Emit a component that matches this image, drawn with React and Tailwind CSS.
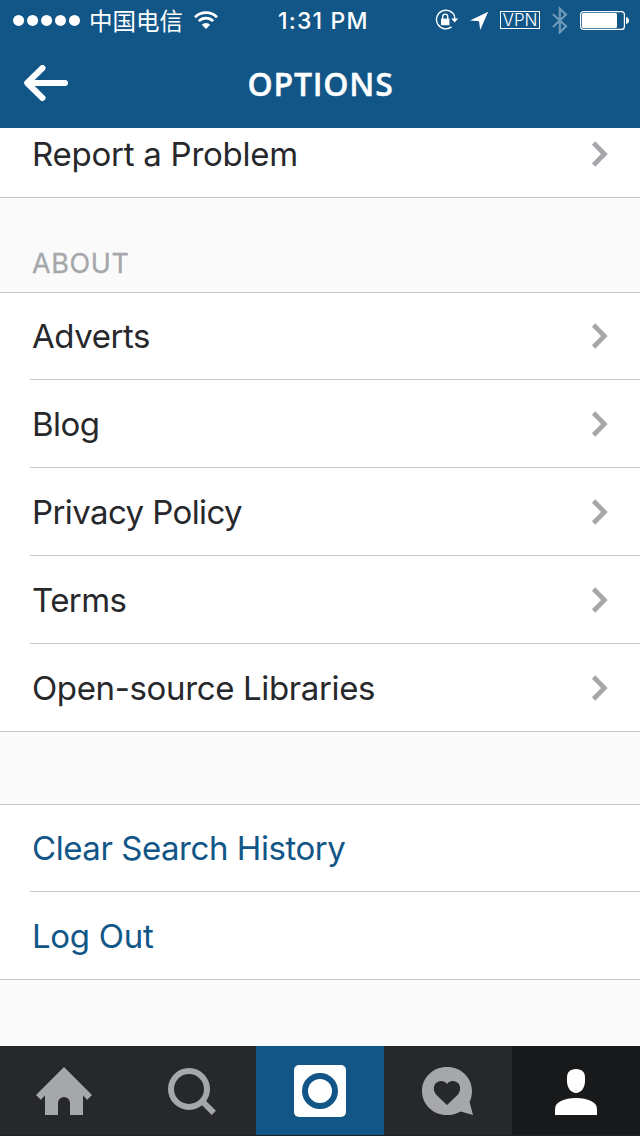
import React from "react";

const aboutLinks = [
  { label: "Adverts", spacing: "tracking-[-0.45px]" },
  { label: "Blog", spacing: "tracking-[-0.5px]" },
  { label: "Privacy Policy", spacing: "tracking-[-0.6px]" },
  { label: "Terms", spacing: "tracking-[-0.55px]" },
  { label: "Open-source Libraries", spacing: "tracking-[-0.36px]" },
];

const accountActions = [
  { label: "Clear Search History", spacing: "tracking-[-0.45px]" },
  { label: "Log Out", spacing: "tracking-[-0.3px]" },
];

function Chevron() {
  return (
    <svg width="18" height="28" viewBox="0 0 18 28" className="shrink-0">
      <path d="M2.6 3L13.4 14L2.6 25" fill="none" stroke="#a5a7aa" strokeWidth="4.8" />
    </svg>
  );
}

function StatusBar() {
  return (
    <div className="grid h-10 grid-cols-[278px_90px_1fr] items-center text-white">
      {/* Signal, carrier, wifi */}
      <div className="flex h-10 items-center pl-[13px]">
        <svg width="68" height="12" viewBox="0 0 68 12">
          <circle cx="5.6" cy="6.4" r="5.5" fill="#fff" />
          <circle cx="19.6" cy="6.4" r="5.5" fill="#fff" />
          <circle cx="33.6" cy="6.4" r="5.5" fill="#fff" />
          <circle cx="47.5" cy="6.4" r="5.5" fill="#fff" />
          <circle cx="61.5" cy="6.4" r="5.5" fill="#fff" />
        </svg>
        <span className="ml-[8px] whitespace-nowrap font-['Noto_Sans_CJK_SC',sans-serif] text-[23.5px] leading-[38px] font-normal">
          中国电信
        </span>
        <svg width="26" height="20" viewBox="0 0 26 20" className="ml-[10px]">
          <path d="M2 7.2A15.6 15.6 0 0 1 24 7.2" fill="none" stroke="#fff" strokeWidth="2.8" />
          <path d="M5.8 11.1A10.2 10.2 0 0 1 20.2 11.1" fill="none" stroke="#fff" strokeWidth="2.7" />
          <path d="M13 19L8.8 14.8A5.9 5.9 0 0 1 17.2 14.8Z" fill="#fff" />
        </svg>
      </div>

      <span className="pt-0.5 whitespace-nowrap text-[23px] leading-[38px] font-medium tracking-[1.2px]">1:31 PM</span>

      {/* Lock, location, vpn, bluetooth, battery */}
      <div className="flex h-10 items-center pl-[66px]">
        <svg width="25" height="22" viewBox="0 0 25 22">
          <path d="M20.6 7.5A9.3 9.3 0 1 0 17.5 17.9" fill="none" stroke="#fff" strokeWidth="1.4" />
          <path d="M17.2 9.5H24.2L20.6 13.6Z" fill="#fff" />
          <path d="M20.6 7.5V10" stroke="#fff" strokeWidth="1.4" />
          <rect x="7" y="9.6" width="8.4" height="6.6" fill="#fff" />
          <path d="M8.7 10V7.6A2.5 2.5 0 0 1 13.7 7.6V10" fill="none" stroke="#fff" strokeWidth="1.4" />
        </svg>
        <svg width="20" height="20" viewBox="0 0 20 20" className="ml-[10px]">
          <path d="M19.2 1.8L11.2 20L10 11.2L1 10.4Z" fill="#fff" />
        </svg>
        <span className="ml-[11px] flex h-[18px] w-10 items-center justify-center border border-white text-[17px] leading-none font-light">
          VPN
        </span>
        <svg width="16" height="28" viewBox="0 0 16 28" className="ml-[12px]">
          <path
            d="M1 8.2L14 20.3L7.8 26.3V2.8L14 8.600L1 21"
            fill="none"
            stroke="#fff"
            strokeOpacity="0.4"
            strokeWidth="2.2"
          />
        </svg>
        <svg width="50" height="20" viewBox="0 0 50 20" className="ml-[12px]">
          <rect x="0.6" y="1.6" width="43.8" height="17.8" rx="3" fill="none" stroke="#fff" strokeWidth="1.2" />
          <rect x="2" y="3" width="35" height="15" rx="1.5" fill="#fff" />
          <path d="M46 7Q49 8 49 10.5T46 14Z" fill="#fff" />
        </svg>
      </div>
    </div>
  );
}

function Header() {
  return (
    <header className="h-32 bg-[#125688] text-white">
      <StatusBar />
      <div className="grid h-[88px] grid-cols-[120px_1fr_120px] items-center">
        <button className="pl-6">
          <svg width="45" height="38" viewBox="0 0 45 38">
            <path
              d="M18.5 3L3.200 18L18.5 33M4 18H41"
              fill="none"
              stroke="#fff"
              strokeWidth="6"
              strokeLinecap="round"
              strokeLinejoin="round"
            />
          </svg>
        </button>
        <h1 className="pl-px text-center font-['Open_Sans',sans-serif] text-[32px] leading-[44px] font-semibold tracking-[0.8px] [-webkit-text-stroke:0.4px_white]">
          OPTIONS
        </h1>
      </div>
    </header>
  );
}

function TabBar() {
  return (
    <nav className="grid h-[90px] grid-cols-5 border-b border-[#1f2024] bg-[#27282c]">
      <a className="flex justify-center pt-5">
        <svg width="58" height="50" viewBox="0 0 58 50">
          <path
            d="M29 1L57 29L52.2 33.8L48 29.6V49H35V37A6 6 0 0 0 23 37V49H10V29.6L5.8 33.8L1 29Z"
            fill="#a5a7aa"
          />
        </svg>
      </a>
      <a className="flex justify-center pt-5">
        <svg width="52" height="52" viewBox="0 0 52 52">
          <circle cx="23" cy="23" r="18" fill="none" stroke="#a5a7aa" strokeWidth="6" />
          <path d="M36 35L47.8 46.8" stroke="#a5a7aa" strokeWidth="6" />
        </svg>
      </a>
      <a className="flex justify-center bg-[#125688] pt-[19px]">
        <svg width="52" height="52" viewBox="0 0 52 52">
          <rect width="52" height="52" rx="5" fill="#fff" />
          <circle cx="26" cy="26" r="15" fill="none" stroke="#125688" strokeWidth="6" />
        </svg>
      </a>
      <a className="flex justify-center pt-5">
        <svg width="54" height="50" viewBox="0 0 54 50">
          <path
            d="M26 1C40 1 51 11.5 51 25C51 29 50 33 48.6 36L52 49L39.6 45.4C35.5 47.8 31 49 26 49C12 49 1 38.5 1 25C1 11.5 12 1 26 1Z"
            fill="#a5a7aa"
          />
          <path
            d="M26 39L16 29.5C12 25.5 12 20 15 17C18.5 13.8 23.8 14.4 26 18C28.2 14.4 33.5 13.8 37 17C40 20 40 25.5 36 29.5Z"
            fill="#27282c"
          />
        </svg>
      </a>
      <a className="flex justify-center bg-[#18191b] pt-[22px]">
        <svg width="42" height="48" viewBox="0 0 42 48">
          <path
            d="M21 1C27 1 30 4.500 30 9.500V13C30 20 26 25 21 25C16 25 12 20 12 13V9.500C12 4.500 15 1 21 1Z"
            fill="#fff"
          />
          <path d="M0 47V41C0 34 9 30 21 30S42 34 42 41V47Z" fill="#fff" />
        </svg>
      </a>
    </nav>
  );
}

function App() {
  return (
    <div className="flex h-[1136px] w-[640px] flex-col overflow-hidden bg-[#fafafa] font-[Inter,sans-serif] text-[#27282c]">
      <Header />

      <main className="flex-1 text-[33px] leading-[44px]">
        <div className="flex h-[70px] items-start justify-between border-b border-[#c7c8ca] bg-white pt-1 pr-[31px] pl-8">
          <span className="tracking-[-0.25px]">Report a Problem</span>
          <span className="pt-2">
            <Chevron />
          </span>
        </div>

        <h2 className="h-[94px] pt-[44px] pl-8 text-[27px] tracking-[0.6px] text-[#a5a7aa] [-webkit-text-stroke:0.3px_#a5a7aa]">
          ABOUT
        </h2>

        <ul className="border-y border-[#c7c8ca] bg-white pl-[30px]">
          {aboutLinks.map(({ label, spacing }) => (
            <li
              key={label}
              className="flex h-[88px] items-center justify-between border-b border-[#c7c8ca] pr-[31px] pl-0.5 first:h-[87px] last:h-[87px] last:border-b-0"
            >
              <span className={spacing}>{label}</span>
              <Chevron />
            </li>
          ))}
        </ul>

        <ul className="mt-[72px] border-y border-[#c7c8ca] bg-white pl-[30px] text-[#125688]">
          {accountActions.map(({ label, spacing }) => (
            <li
              key={label}
              className="flex h-[87px] items-center border-b border-[#c7c8ca] pl-0.5 last:border-b-0"
            >
              <span className={spacing}>{label}</span>
            </li>
          ))}
        </ul>
      </main>

      <TabBar />
    </div>
  );
}

export default App;
